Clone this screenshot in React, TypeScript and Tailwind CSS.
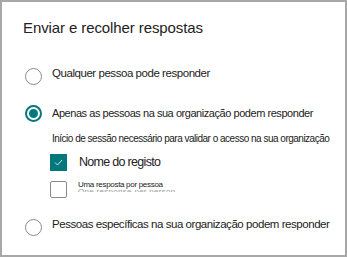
import React from "react";

const Radio = ({ checked }: { checked?: boolean }) =>
  checked ? (
    <div className="w-[17px] h-[17px] rounded-full border-[2px] border-[#03787c] flex items-center justify-center shrink-0">
      <div className="w-[9px] h-[9px] rounded-full bg-[#03787c]" />
    </div>
  ) : (
    <div className="w-[17px] h-[17px] rounded-full border border-[#8a8a8a] shrink-0" />
  );

export default function App() {
  return (
    <div
      className="w-[347px] h-[257px] border-2 border-[#a8a8a8] bg-white text-[#222] overflow-hidden"
      style={{ fontFamily: '"Liberation Sans", Arial, sans-serif' }}
    >
      <div className="pl-[21px] pt-[16px] text-[15px] tracking-[-0.1px] leading-[20px] text-[#222] whitespace-nowrap">
        Enviar e recolher respostas
      </div>
      <div className="pl-[23px] pt-[29px] flex flex-col whitespace-nowrap">
        <div className="flex items-center gap-[10px] h-[18px]">
          <Radio />
          <span className="text-[11.5px] tracking-[-0.45px] -mt-[5px]">Qualquer pessoa pode responder</span>
        </div>
        <div className="flex items-center gap-[10px] h-[18px] mt-[19px]">
          <Radio checked />
          <span className="text-[11px] tracking-[-0.45px]">Apenas as pessoas na sua organização podem responder</span>
        </div>
        <div className="pl-[27px] mt-[10px] text-[10px] tracking-[-0.5px] leading-[14px]">
          Início de sessão necessário para validar o acesso na sua organização
        </div>
        <div className="pl-[25px] mt-[8px] flex items-center gap-[12px] h-[17px]">
          <div className="w-[17px] h-[17px] bg-[#03787c] flex items-center justify-center">
            <svg width="9" height="7" viewBox="0 0 9 7" fill="none">
              <path d="M1 3.5 L3.5 6 L8 1" stroke="#cfe6e6" strokeWidth="1" />
            </svg>
          </div>
          <span className="text-[12.5px] tracking-[-0.7px]">Nome do registo</span>
        </div>
        <div className="pl-[25px] mt-[10px] flex items-start gap-[11px] h-[17px]">
          <div className="w-[17px] h-[17px] border border-[#8a8a8a] rounded-[2px] bg-white shrink-0" />
          <div className="relative -mt-[1px]">
            <span className="block text-[8px] leading-[10px] tracking-[-0.3px] relative z-10">Uma resposta por pessoa</span>
            <span className="block h-[3px] overflow-hidden text-[8px] leading-[6px] text-[#999] -mt-[1px] tracking-[0.3px]">
              One response per person
            </span>
          </div>
        </div>
        <div className="flex items-center gap-[10px] h-[18px] mt-[20px]">
          <Radio />
          <span className="text-[11.5px] tracking-[-0.45px] -mt-[5px]">Pessoas específicas na sua organização podem responder</span>
        </div>
      </div>
    </div>
  );
}
